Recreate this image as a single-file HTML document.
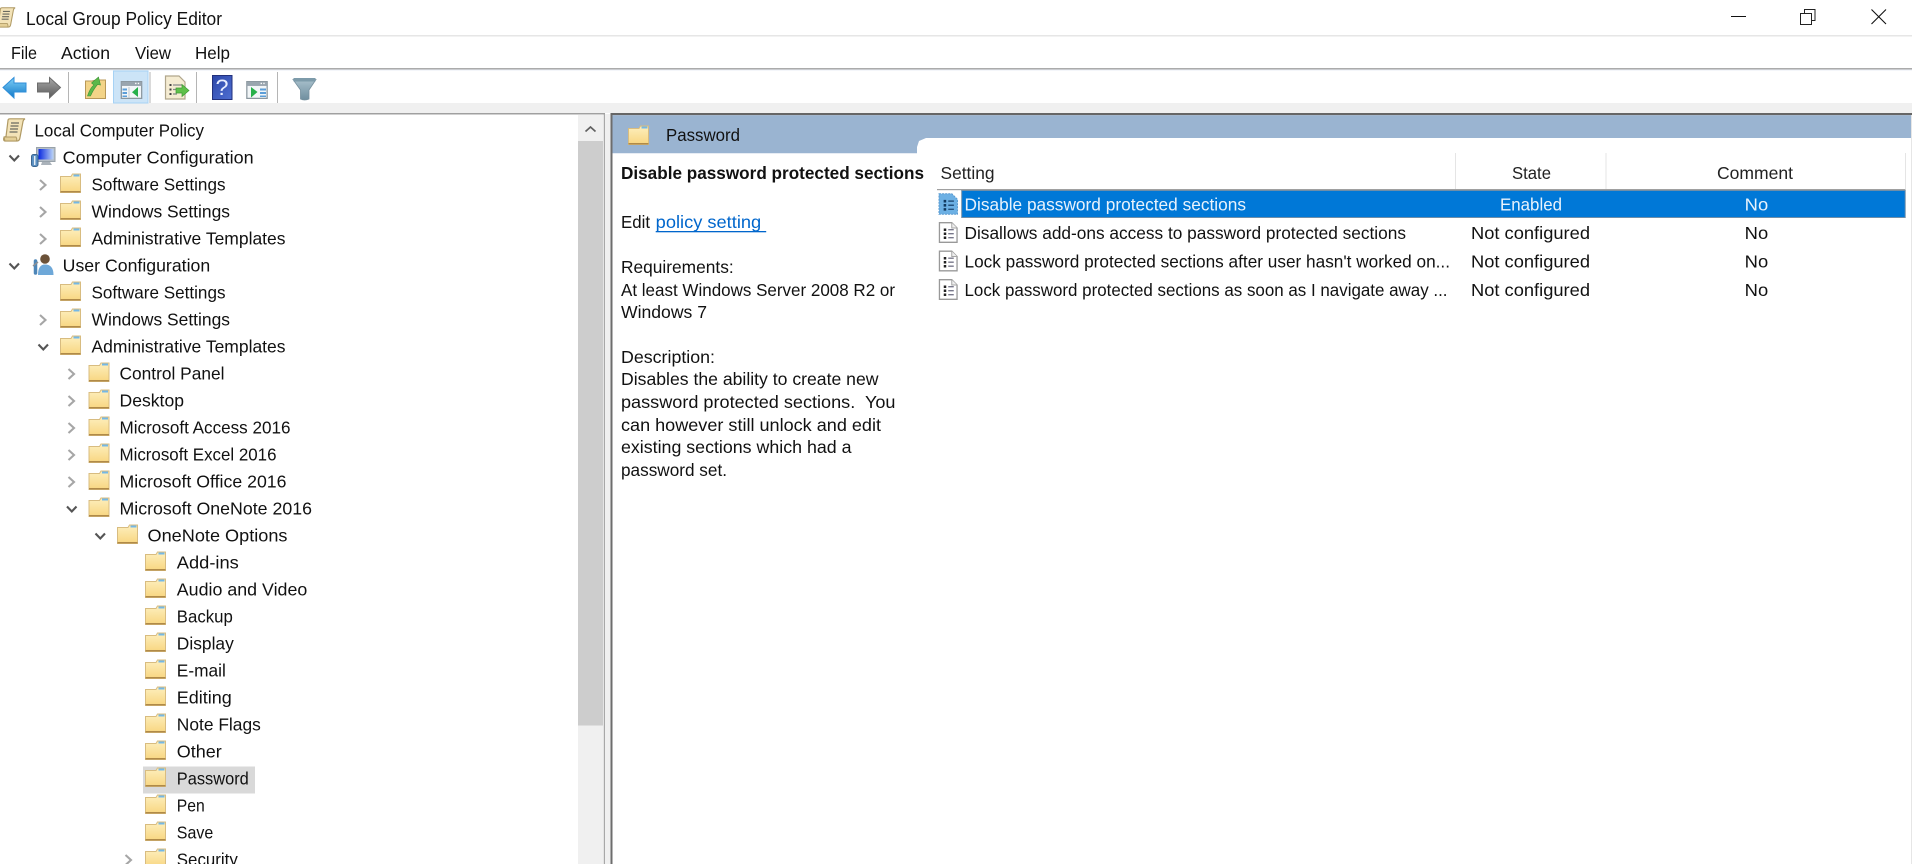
<!DOCTYPE html>
<html><head><meta charset="utf-8"><title>Local Group Policy Editor</title>
<style>
html,body{margin:0;padding:0;background:#fff;width:1912px;height:864px;overflow:hidden}
svg{display:block;filter:blur(.35px)}
text{font-family:"Liberation Sans",sans-serif;font-size:17.5px;fill:#111;white-space:pre}
.w{fill:#e8f2fc}
</style></head><body>
<svg xmlns="http://www.w3.org/2000/svg" width="1912" height="864" viewBox="0 0 1912 864">
<defs>
<linearGradient id="fg" x1="0" y1="0" x2="0" y2="1"><stop offset="0" stop-color="#fdefbe"/><stop offset="1" stop-color="#f8d680"/></linearGradient>
<linearGradient id="bl" x1="0" y1="0" x2="0" y2="1"><stop offset="0" stop-color="#7fd0f8"/><stop offset="1" stop-color="#1078c8"/></linearGradient>
<linearGradient id="gy" x1="0" y1="0" x2="0" y2="1"><stop offset="0" stop-color="#a8a8a8"/><stop offset="1" stop-color="#5a5a5a"/></linearGradient>
<linearGradient id="hp" x1="0" y1="0" x2="1" y2="1"><stop offset="0" stop-color="#2c46a8"/><stop offset="1" stop-color="#4f6fd2"/></linearGradient>
<linearGradient id="fu" x1="0" y1="0" x2="0" y2="1"><stop offset="0" stop-color="#a8c0cc"/><stop offset="1" stop-color="#6f8e9e"/></linearGradient>
<linearGradient id="scr" x1="0" y1="0" x2="1" y2="0"><stop offset="0" stop-color="#0a2ae0"/><stop offset="1" stop-color="#bcd4f6"/></linearGradient>
<symbol id="folder" viewBox="0 0 21 20" overflow="visible">
<path d="M0.500 3.500H11L12.500 1H20.500V19.500H0.500Z" fill="url(#fg)" stroke="#d8bc80" stroke-width="1"/>
<rect x="13.500" y="1.500" width="6" height="2" fill="#74b8e6"/>
<path d="M.5 18.800H20.500" stroke="#b08a48" stroke-width="1.500"/>
</symbol>
<symbol id="scroll" viewBox="0 0 23 24" overflow="visible">
<path d="M5 2.500Q5 .8 7 .8H22Q20.400 1.600 20 3.500L17 19.500Q16.600 23 14 23H2Q.4 23 .7 20.500Q.9 18.600 3 18.600Z" fill="#f3e3b8" stroke="#b09a64" stroke-width="1.200"/>
<path d="M8 5H16M7.500 8H15.500M7 11H15M6.500 14H14.500" stroke="#6a6a60" stroke-width="1.300"/>
<path d="M1 19H13Q14.300 21 13.500 23H2Z" fill="#e4cf96" stroke="#b09a64"/>
</symbol>
<symbol id="pol" viewBox="0 0 19 21" overflow="visible">
<path d="M.7 .7H13L18.300 6V20.300H.7Z" fill="#fff" stroke="#999" stroke-width="1.300"/>
<path d="M13 .7V6H18.300" fill="#eee" stroke="#a6a6a6"/>
<path d="M5 6.500h2.500v2.500H5zM5 10.500h2.500v2.500H5zM5 14.500h2.500v2.500H5z" fill="#222"/>
<path d="M9.500 7.700H15M9.500 11.700H15M9.500 15.700H15" stroke="#77778a" stroke-width="1.400"/>
</symbol>
<symbol id="polsel" viewBox="0 0 19 21" overflow="visible">
<path d="M.5 .5H13L18.500 6V20.500H.5Z" fill="#6cb0e4" stroke="#5a9ad0" stroke-dasharray="2 1"/>
<path d="M5 6.500h2.500v2.500H5zM5 10.500h2.500v2.500H5zM5 14.500h2.500v2.500H5z" fill="#123a60"/>
<path d="M9.500 7.700H15M9.500 11.700H15M9.500 15.700H15" stroke="#24527e" stroke-width="1.400"/>
</symbol>
<symbol id="pane" viewBox="0 0 24 20" overflow="visible">
<rect x=".7" y=".7" width="22.600" height="18.600" fill="#f2f6f8" stroke="#8b979f" stroke-width="1.400"/>
<rect x="1" y="1" width="22" height="4.500" fill="#99a5ae"/>
<path d="M16 2h1.500v1.500H16zM19 2h1.500v1.500H19z" fill="#fff"/>
</symbol>
</defs>

<!-- title bar -->
<rect x="0" y="35" width="1912" height="1.500" fill="#e6e6e6"/>
<use href="#scroll" x="-4" y="6" width="20" height="23"/>
<text x="26" y="25" textLength="196" lengthAdjust="spacingAndGlyphs" style="font-size:18px">Local Group Policy Editor</text>
<path d="M1731 16.500H1746" stroke="#111" stroke-width="1"/>
<path d="M1800.500 13.500H1811.500V24.500H1800.500ZM1804.500 13V9.500H1815V20.500H1811.500" fill="none" stroke="#222" stroke-width="1"/>
<path d="M1871.500 9.500L1886 24M1886 9.500L1871.500 24" stroke="#111" stroke-width="1.100"/>

<!-- menu -->
<text x="11" y="59" textLength="26" lengthAdjust="spacingAndGlyphs">File</text>
<text x="61" y="59" textLength="49" lengthAdjust="spacingAndGlyphs">Action</text>
<text x="135" y="59" textLength="36" lengthAdjust="spacingAndGlyphs">View</text>
<text x="195" y="59" textLength="35" lengthAdjust="spacingAndGlyphs">Help</text>
<rect x="0" y="68" width="1912" height="1.500" fill="#ababab"/>
<rect x="0" y="69.500" width="1912" height="1" fill="#e8eef4"/>

<!-- toolbar -->
<rect x="0" y="103" width="1912" height="10" fill="#f0f0f0"/>
<rect x="113.500" y="71" width="34.500" height="32" fill="#cce4f7" stroke="#a6d2f5"/>
<path d="M3 87.500L14 77.500V83H26V92H14V98Z" fill="url(#bl)" stroke="#2f8ed8" stroke-width="1"/>
<path d="M60.500 87.500L49.500 77.500V83H37.500V92H49.500V98Z" fill="url(#gy)" stroke="#6c6c6c" stroke-width="1"/>
<path d="M68.500 72V103M150 72V103M196.500 72V103M277.500 72V103" stroke="#b5b5b5" stroke-width="1"/>
<path d="M85.500 81H92L96 80H105.500V98.500H85.500Z" fill="#f3d488" stroke="#b89858"/>
<path d="M87.500 96Q90 88 94 85L91.500 83L98.500 77L100.500 85L97.500 84.500Q93 90 90.500 96Z" fill="#5cb84a" stroke="#3d9636" stroke-width=".6"/>
<use href="#pane" x="120" y="81" width="23" height="18"/>
<path d="M122.500 88.500h4.500v2h-4.500zM122.500 92h4.500v2h-4.500zM122.500 95.500h4.500v1.500h-4.500z" fill="#5c9ed8"/>
<path d="M129 87V97.500" stroke="#b6c0c6" stroke-width=".8"/>
<path d="M138 87L132 92.200L138 97Z" fill="#27b04a"/>
<path d="M165.500 76H179L185 82V99H165.500Z" fill="#f5ecd2" stroke="#b0a68c" stroke-width="1.200"/>
<path d="M169.500 84h2v2h-2zM169.500 88.500h2v2h-2zM169.500 93h2v2h-2z" fill="#444"/>
<path d="M173 85H182M173 89.500H178M173 94H177" stroke="#888" stroke-width="1.200"/>
<path d="M189 90.500L182 84.500V88H176V93H182V96.500Z" fill="#5fc04a" stroke="#3d9c34" stroke-width=".7"/>
<rect x="212.500" y="75.500" width="19.500" height="24" fill="url(#hp)" stroke="#22307c"/>
<text x="215.500" y="95" textLength="13" lengthAdjust="spacingAndGlyphs" style="font-size:22px;fill:#e8eeff">?</text>
<use href="#pane" x="245.500" y="81" width="23" height="18"/>
<path d="M260 88.500h6v2h-6zM260 92h6v2h-6zM260 95.500h6v1.500h-6z" fill="#5c9ed8"/>
<path d="M251 87L257.500 92L251 97.500Z" fill="#27b04a"/>
<path d="M293 79.500H316L309 90V99Q304.500 101 300.500 99V90Z" fill="url(#fu)" stroke="#76909e" stroke-width=".8"/>
<path d="M293.500 78H315.500V81.500H293.500Z" fill="#7d9baa"/>

<!-- left pane -->
<rect x="0" y="113" width="605" height="1.500" fill="#a0a0a0"/>
<rect x="0" y="114.500" width="604" height="749.500" fill="#fff"/>
<rect x="578" y="115" width="25" height="749" fill="#f0f0f0"/>
<rect x="578" y="141" width="25" height="584.500" fill="#cdcdcd"/>
<path d="M585.500 131.500L590.500 127L595.500 131.500" fill="none" stroke="#606060" stroke-width="1.700"/>
<rect x="603.700" y="114" width="1.300" height="750" fill="#a8a8a8"/>
<rect x="605" y="114" width="5.500" height="750" fill="#f0f0f0"/>
<rect x="610.500" y="114" width="2" height="750" fill="#6d6d6d"/>

<!-- selected tree row -->
<rect x="143" y="766.500" width="112" height="27" fill="#d9d9d9"/>

<!-- tree icons -->
<use href="#scroll" x="3" y="118" width="23" height="24"/>
<rect x="36.500" y="147.500" width="18.500" height="14" fill="#b6bec6" stroke="#98a2aa"/>
<rect x="38.500" y="149" width="15" height="10.500" fill="url(#scr)"/>
<path d="M42 162H50L52 165H41Z" fill="#aab2ba"/>
<rect x="31.500" y="154.500" width="6.500" height="12" rx="2" fill="#5b90c2" stroke="#3b6590"/>
<path d="M34.700 156V165" stroke="#e4edf5" stroke-width="1.500"/>

<circle cx="45" cy="259" r="4.800" fill="#6b5138"/>
<path d="M38 275Q38 264.500 45 264.500Q53.500 264.500 53.500 275Z" fill="#6ea8d8"/>
<path d="M35.500 261V273" stroke="#4d86b8" stroke-width="3.500" stroke-linecap="round"/>
<path d="M38 262L33 266" stroke="#8a8f94" stroke-width="1.500"/>

<g fill="none" stroke="#555" stroke-width="2.100">
<path d="M9.500 155.500L14.300 160.500L19 155.500"/><path d="M9.500 263.500L14.300 268.500L19 263.500"/>
<path d="M38.500 344.500L43.300 349.500L48 344.500"/>
<path d="M67 506.500L71.800 511.500L76.500 506.500"/>
<path d="M95.500 533.500L100.300 538.500L105 533.500"/>
</g>
<g fill="none" stroke="#a6a6a6" stroke-width="2.100">
<path d="M40 180L45.500 185L40 190"/><path d="M40 207L45.500 212L40 217"/><path d="M40 234L45.500 239L40 244"/>
<path d="M40 315L45.500 320L40 325"/>
<path d="M68.500 369L74 374L68.500 379"/><path d="M68.500 396L74 401L68.500 406"/><path d="M68.500 423L74 428L68.500 433"/><path d="M68.500 450L74 455L68.500 460"/><path d="M68.500 477L74 482L68.500 487"/>
<path d="M125.500 855L131 860L125.500 865"/>
</g>

<g>
<use href="#folder" x="60" y="173" width="21" height="20"/><use href="#folder" x="60" y="200" width="21" height="20"/><use href="#folder" x="60" y="227" width="21" height="20"/>
<use href="#folder" x="60" y="281" width="21" height="20"/><use href="#folder" x="60" y="308" width="21" height="20"/><use href="#folder" x="60" y="335" width="21" height="20"/>
<use href="#folder" x="88.500" y="362" width="21" height="20"/><use href="#folder" x="88.500" y="389" width="21" height="20"/><use href="#folder" x="88.500" y="416" width="21" height="20"/><use href="#folder" x="88.500" y="443" width="21" height="20"/><use href="#folder" x="88.500" y="470" width="21" height="20"/><use href="#folder" x="88.500" y="497" width="21" height="20"/>
<use href="#folder" x="117" y="524" width="21" height="20"/>
<use href="#folder" x="145" y="551" width="21" height="20"/><use href="#folder" x="145" y="578" width="21" height="20"/><use href="#folder" x="145" y="605" width="21" height="20"/><use href="#folder" x="145" y="632" width="21" height="20"/><use href="#folder" x="145" y="659" width="21" height="20"/><use href="#folder" x="145" y="686" width="21" height="20"/><use href="#folder" x="145" y="713" width="21" height="20"/><use href="#folder" x="145" y="740" width="21" height="20"/><use href="#folder" x="145" y="767" width="21" height="20"/><use href="#folder" x="145" y="794" width="21" height="20"/><use href="#folder" x="145" y="821" width="21" height="20"/><use href="#folder" x="145" y="848" width="21" height="20"/>
</g>

<!-- tree text -->
<g>
<text x="34.500" y="136.500" textLength="169.500" lengthAdjust="spacingAndGlyphs">Local Computer Policy</text>
<text x="62.700" y="163.500" textLength="191" lengthAdjust="spacingAndGlyphs">Computer Configuration</text>
<text x="91.500" y="190.500" textLength="134" lengthAdjust="spacingAndGlyphs">Software Settings</text>
<text x="91.500" y="217.500" textLength="138.500" lengthAdjust="spacingAndGlyphs">Windows Settings</text>
<text x="91.500" y="244.500" textLength="194" lengthAdjust="spacingAndGlyphs">Administrative Templates</text>
<text x="62.700" y="271.500" textLength="147.500" lengthAdjust="spacingAndGlyphs">User Configuration</text>
<text x="91.500" y="298.500" textLength="134" lengthAdjust="spacingAndGlyphs">Software Settings</text>
<text x="91.500" y="325.500" textLength="138.500" lengthAdjust="spacingAndGlyphs">Windows Settings</text>
<text x="91.500" y="352.500" textLength="194" lengthAdjust="spacingAndGlyphs">Administrative Templates</text>
<text x="119.500" y="379.500" textLength="105" lengthAdjust="spacingAndGlyphs">Control Panel</text>
<text x="119.500" y="406.500" textLength="64.500" lengthAdjust="spacingAndGlyphs">Desktop</text>
<text x="119.500" y="433.500" textLength="171" lengthAdjust="spacingAndGlyphs">Microsoft Access 2016</text>
<text x="119.500" y="460.500" textLength="157" lengthAdjust="spacingAndGlyphs">Microsoft Excel 2016</text>
<text x="119.500" y="487.500" textLength="167" lengthAdjust="spacingAndGlyphs">Microsoft Office 2016</text>
<text x="119.500" y="514.500" textLength="192.500" lengthAdjust="spacingAndGlyphs">Microsoft OneNote 2016</text>
<text x="147.500" y="541.500" textLength="140" lengthAdjust="spacingAndGlyphs">OneNote Options</text>
<text x="176.800" y="568.500" textLength="62" lengthAdjust="spacingAndGlyphs">Add-ins</text>
<text x="176.800" y="595.500" textLength="130.500" lengthAdjust="spacingAndGlyphs">Audio and Video</text>
<text x="176.800" y="622.500" textLength="56" lengthAdjust="spacingAndGlyphs">Backup</text>
<text x="176.800" y="649.500" textLength="57" lengthAdjust="spacingAndGlyphs">Display</text>
<text x="176.800" y="676.500" textLength="49" lengthAdjust="spacingAndGlyphs">E-mail</text>
<text x="176.800" y="703.500" textLength="55" lengthAdjust="spacingAndGlyphs">Editing</text>
<text x="176.800" y="730.500" textLength="84" lengthAdjust="spacingAndGlyphs">Note Flags</text>
<text x="176.800" y="757.500" textLength="45" lengthAdjust="spacingAndGlyphs">Other</text>
<text x="176.800" y="784.500" textLength="72" lengthAdjust="spacingAndGlyphs">Password</text>
<text x="176.800" y="811.500" textLength="28" lengthAdjust="spacingAndGlyphs">Pen</text>
<text x="176.800" y="838.500" textLength="36.500" lengthAdjust="spacingAndGlyphs">Save</text>
<text x="176.800" y="865.500" textLength="61" lengthAdjust="spacingAndGlyphs">Security</text>
</g>

<!-- right pane -->
<rect x="610.500" y="113" width="1301.500" height="2.200" fill="#666"/>
<path d="M612.500 115.200H1912V138H926L919 141L917 147V153.300H612.500Z" fill="#9ab4d1"/>
<rect x="1911" y="115" width="1" height="749" fill="#e6e6e6"/>
<use href="#folder" x="628" y="125" width="21" height="20"/>
<text x="666" y="141" textLength="74" lengthAdjust="spacingAndGlyphs">Password</text>

<!-- extended pane -->
<text x="621" y="179" textLength="303" lengthAdjust="spacingAndGlyphs" style="font-weight:bold">Disable password protected sections</text>
<text x="621" y="228" textLength="29" lengthAdjust="spacingAndGlyphs">Edit</text>
<text x="655.700" y="228" textLength="105.500" lengthAdjust="spacingAndGlyphs" style="fill:#0066cc">policy setting</text>
<rect x="655.700" y="231" width="110.500" height="1.300" fill="#0066cc"/>
<text x="621" y="273" textLength="112.700" lengthAdjust="spacingAndGlyphs">Requirements:</text>
<text x="621" y="296" textLength="274" lengthAdjust="spacingAndGlyphs">At least Windows Server 2008 R2 or</text>
<text x="621" y="318" textLength="86" lengthAdjust="spacingAndGlyphs">Windows 7</text>
<text x="621" y="363" textLength="94" lengthAdjust="spacingAndGlyphs">Description:</text>
<text x="621" y="385" textLength="257.500" lengthAdjust="spacingAndGlyphs">Disables the ability to create new</text>
<text x="621" y="408" textLength="274.500" lengthAdjust="spacingAndGlyphs">password protected sections.  You</text>
<text x="621" y="431" textLength="260" lengthAdjust="spacingAndGlyphs">can however still unlock and edit</text>
<text x="621" y="453" textLength="230.500" lengthAdjust="spacingAndGlyphs">existing sections which had a</text>
<text x="621" y="476" textLength="106" lengthAdjust="spacingAndGlyphs">password set.</text>

<!-- table header -->
<text x="940.500" y="179" textLength="54" lengthAdjust="spacingAndGlyphs" style="fill:#222">Setting</text>
<text x="1512" y="179" textLength="39" lengthAdjust="spacingAndGlyphs" style="fill:#222">State</text>
<text x="1717" y="179" textLength="76" lengthAdjust="spacingAndGlyphs" style="fill:#222">Comment</text>
<path d="M1455.500 153V189M1606 153V189M1905.500 153V189" stroke="#e5e5e5" stroke-width="1"/>
<rect x="937" y="189" width="968.500" height="1.200" fill="#a0a0a0"/>

<!-- rows -->
<rect x="961.700" y="190.500" width="943.500" height="27" fill="#0078d7" stroke="#6f8ea8" stroke-width="1"/>
<use href="#polsel" x="938.500" y="193" width="19.500" height="22"/>
<use href="#pol" x="938.500" y="222" width="19.500" height="21"/>
<use href="#pol" x="938.500" y="250.500" width="19.500" height="21"/>
<use href="#pol" x="938.500" y="279" width="19.500" height="21"/>

<text class="w" x="964.500" y="210.500" textLength="281.500" lengthAdjust="spacingAndGlyphs">Disable password protected sections</text>
<text class="w" x="1500" y="210.500" textLength="62" lengthAdjust="spacingAndGlyphs">Enabled</text>
<text class="w" x="1744.700" y="210.500" textLength="23.500" lengthAdjust="spacingAndGlyphs">No</text>

<text x="964.500" y="239" textLength="441.500" lengthAdjust="spacingAndGlyphs">Disallows add-ons access to password protected sections</text>
<text x="1471" y="239" textLength="119" lengthAdjust="spacingAndGlyphs">Not configured</text>
<text x="1744.700" y="239" textLength="23.500" lengthAdjust="spacingAndGlyphs">No</text>

<text x="964.500" y="267.500" textLength="485.500" lengthAdjust="spacingAndGlyphs">Lock password protected sections after user hasn't worked on...</text>
<text x="1471" y="267.500" textLength="119" lengthAdjust="spacingAndGlyphs">Not configured</text>
<text x="1744.700" y="267.500" textLength="23.500" lengthAdjust="spacingAndGlyphs">No</text>

<text x="964.500" y="296" textLength="483" lengthAdjust="spacingAndGlyphs">Lock password protected sections as soon as I navigate away ...</text>
<text x="1471" y="296" textLength="119" lengthAdjust="spacingAndGlyphs">Not configured</text>
<text x="1744.700" y="296" textLength="23.500" lengthAdjust="spacingAndGlyphs">No</text>
</svg>
</body></html>
